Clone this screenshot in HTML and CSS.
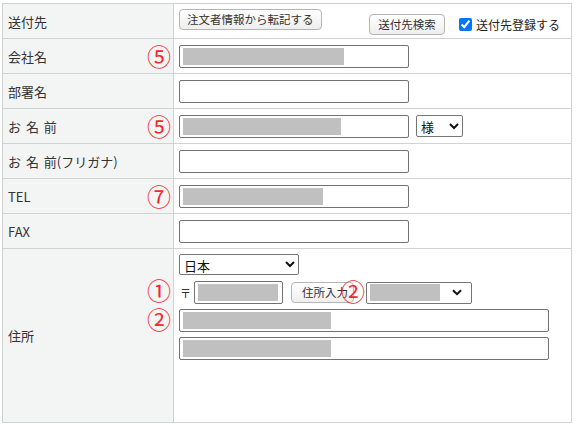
FILE: index.html
```html
<!DOCTYPE html>
<html lang="ja">
<head>
<meta charset="utf-8">
<title>送付先</title>
<link rel="stylesheet" href="styles.css">
</head>
<body>
<table class="form">
  <tr>
    <td class="lbl">送付先</td>
    <td class="val">
      <div class="top-row">
        <button class="btn btn-copy">注文者情報から転記する</button>
        <div class="top-right">
          <button class="btn btn-search">送付先検索</button>
          <label class="chk"><input type="checkbox" checked>送付先登録する</label>
        </div>
      </div>
    </td>
  </tr>
  <tr>
    <td class="lbl"><div class="lbl-in"><span>会社名</span><span class="mark">⑤</span></div></td>
    <td class="val"><div class="field w230"><span class="mask m161"></span></div></td>
  </tr>
  <tr>
    <td class="lbl">部署名</td>
    <td class="val"><div class="field w230"></div></td>
  </tr>
  <tr>
    <td class="lbl"><div class="lbl-in"><span class="spaced">お 名 前</span><span class="mark">⑤</span></div></td>
    <td class="val">
      <div class="line">
        <div class="field w230"><span class="mask m158"></span></div>
        <select class="sel sel-honor"><option>様</option></select>
      </div>
    </td>
  </tr>
  <tr>
    <td class="lbl"><span class="spaced">お 名 前</span>(フリガナ)</td>
    <td class="val"><div class="field w230"></div></td>
  </tr>
  <tr>
    <td class="lbl"><div class="lbl-in"><span>TEL</span><span class="mark">⑦</span></div></td>
    <td class="val"><div class="field w230"><span class="mask m140"></span></div></td>
  </tr>
  <tr>
    <td class="lbl">FAX</td>
    <td class="val"><div class="field w230"></div></td>
  </tr>
  <tr>
    <td class="lbl lbl-addr">住所<span class="mark mark-1">①</span><span class="mark mark-2">②</span></td>
    <td class="val val-addr">
      <div class="addr">
        <select class="sel sel-country"><option>日本</option></select>
        <div class="line zip-line">
          <span class="zip-sym">〒</span>
          <div class="field w89"><span class="mask m80"></span></div>
          <span class="btn-wrap">
            <button class="btn btn-zip">住所入力</button>
            <span class="mark mark-over">②</span>
          </span>
          <div class="fake-sel"><span class="mask m70"></span><svg class="chev" width="10" height="7" viewBox="0 0 10 7"><path d="M1 1.2 L5 5.2 L9 1.2" fill="none" stroke="#111" stroke-width="2"/></svg></div>
        </div>
        <div class="field w370"><span class="mask m148"></span></div>
        <div class="field w370"><span class="mask m148"></span></div>
      </div>
    </td>
  </tr>
</table>
</body>
</html>
```

FILE: styles.css
```css
* { box-sizing: border-box; }
body {
  margin: 0;
  background: #fff;
  font-family: "Noto Sans CJK JP", "Noto Sans", sans-serif;
  font-size: 13px;
  color: #333;
}
.form {
  border-collapse: collapse;
  width: 570px;
  margin: 3px 0 0 2px;
}
.form td {
  border: 1px solid #d2d2d2;
  height: 35px;
  padding: 0 5px;
  vertical-align: middle;
}
.lbl {
  width: 171px;
  background: #f3f4f4;
  padding-right: 2px !important;
}
.spaced { word-spacing: 2px; }
.lbl-in {
  display: flex;
  justify-content: space-between;
  align-items: center;
}
.mark {
  color: #f5262e;
  font-size: 24px;
  line-height: 24px;
}
.top-row {
  display: flex;
  align-items: center;
}
.top-right {
  margin-left: auto;
  display: flex;
  align-items: center;
  padding-top: 6px;
  padding-right: 6px;
}
.btn {
  font-family: inherit;
  font-size: 11.5px;
  color: #333;
  height: 21px;
  padding: 0 7px;
  border: 1px solid #b4b4b4;
  border-radius: 4px;
  background: linear-gradient(#ffffff, #eeeeee);
  line-height: 19px;
}
.btn-copy { margin-bottom: 3px; }
.btn-search { width: 76px; padding: 0; }
.chk {
  display: flex;
  align-items: center;
  margin-left: 11px;
  font-size: 12px;
  color: #222;
}
.chk input {
  margin: 0 4px 0 3px;
  width: 13px;
  height: 13px;
}
.field {
  height: 23px;
  border: 1px solid #727272;
  border-radius: 2px;
  background: #fff;
  padding: 2px 3px;
  display: flex;
}
.w230 { width: 230px; }
.w89 { width: 89px; }
.w370 { width: 370px; }
.mask {
  display: block;
  height: 17px;
  background: #c0c0c0;
}
.m161 { width: 161px; }
.m158 { width: 158px; }
.m140 { width: 140px; }
.m80 { width: 80px; }
.m70 { width: 70px; }
.m148 { width: 148px; }
.line {
  display: flex;
  align-items: center;
}
.sel {
  font-family: inherit;
  font-size: 13px;
  color: #111;
  height: 22px;
  border: 1px solid #767676;
  border-radius: 2px;
  background: #fff;
}
.sel-honor {
  width: 47px;
  margin-left: 7px;
}
.sel-country {
  width: 120px;
  height: 21px;
}
.lbl-addr {
  position: relative;
}
.mark-1, .mark-2 {
  position: absolute;
  right: 2px;
  line-height: 22px;
}
.mark-1 { top: 30px; }
.mark-2 { top: 59px; }
.val-addr {
  vertical-align: top !important;
  padding-top: 5px !important;
  height: 174px !important;
}
.addr {
  display: flex;
  flex-direction: column;
  align-items: flex-start;
  gap: 5px;
}
.zip-line { margin-top: 1px; }
.zip-sym {
  font-size: 11px;
  width: 15px;
  padding-left: 1px;
}
.btn-wrap {
  position: relative;
  margin-left: 8px;
  display: flex;
}
.btn-zip {
  width: 63px;
  padding: 0;
  text-align: left;
  padding-left: 10px;
}
.mark-over {
  position: absolute;
  left: 50px;
  top: -3px;
}
.fake-sel {
  margin-left: 12px;
  width: 106px;
  height: 22px;
  border: 1px solid #767676;
  border-radius: 2px;
  display: flex;
  align-items: center;
  padding: 0 9px 0 3px;
}
.chev { margin-left: auto; }
```
